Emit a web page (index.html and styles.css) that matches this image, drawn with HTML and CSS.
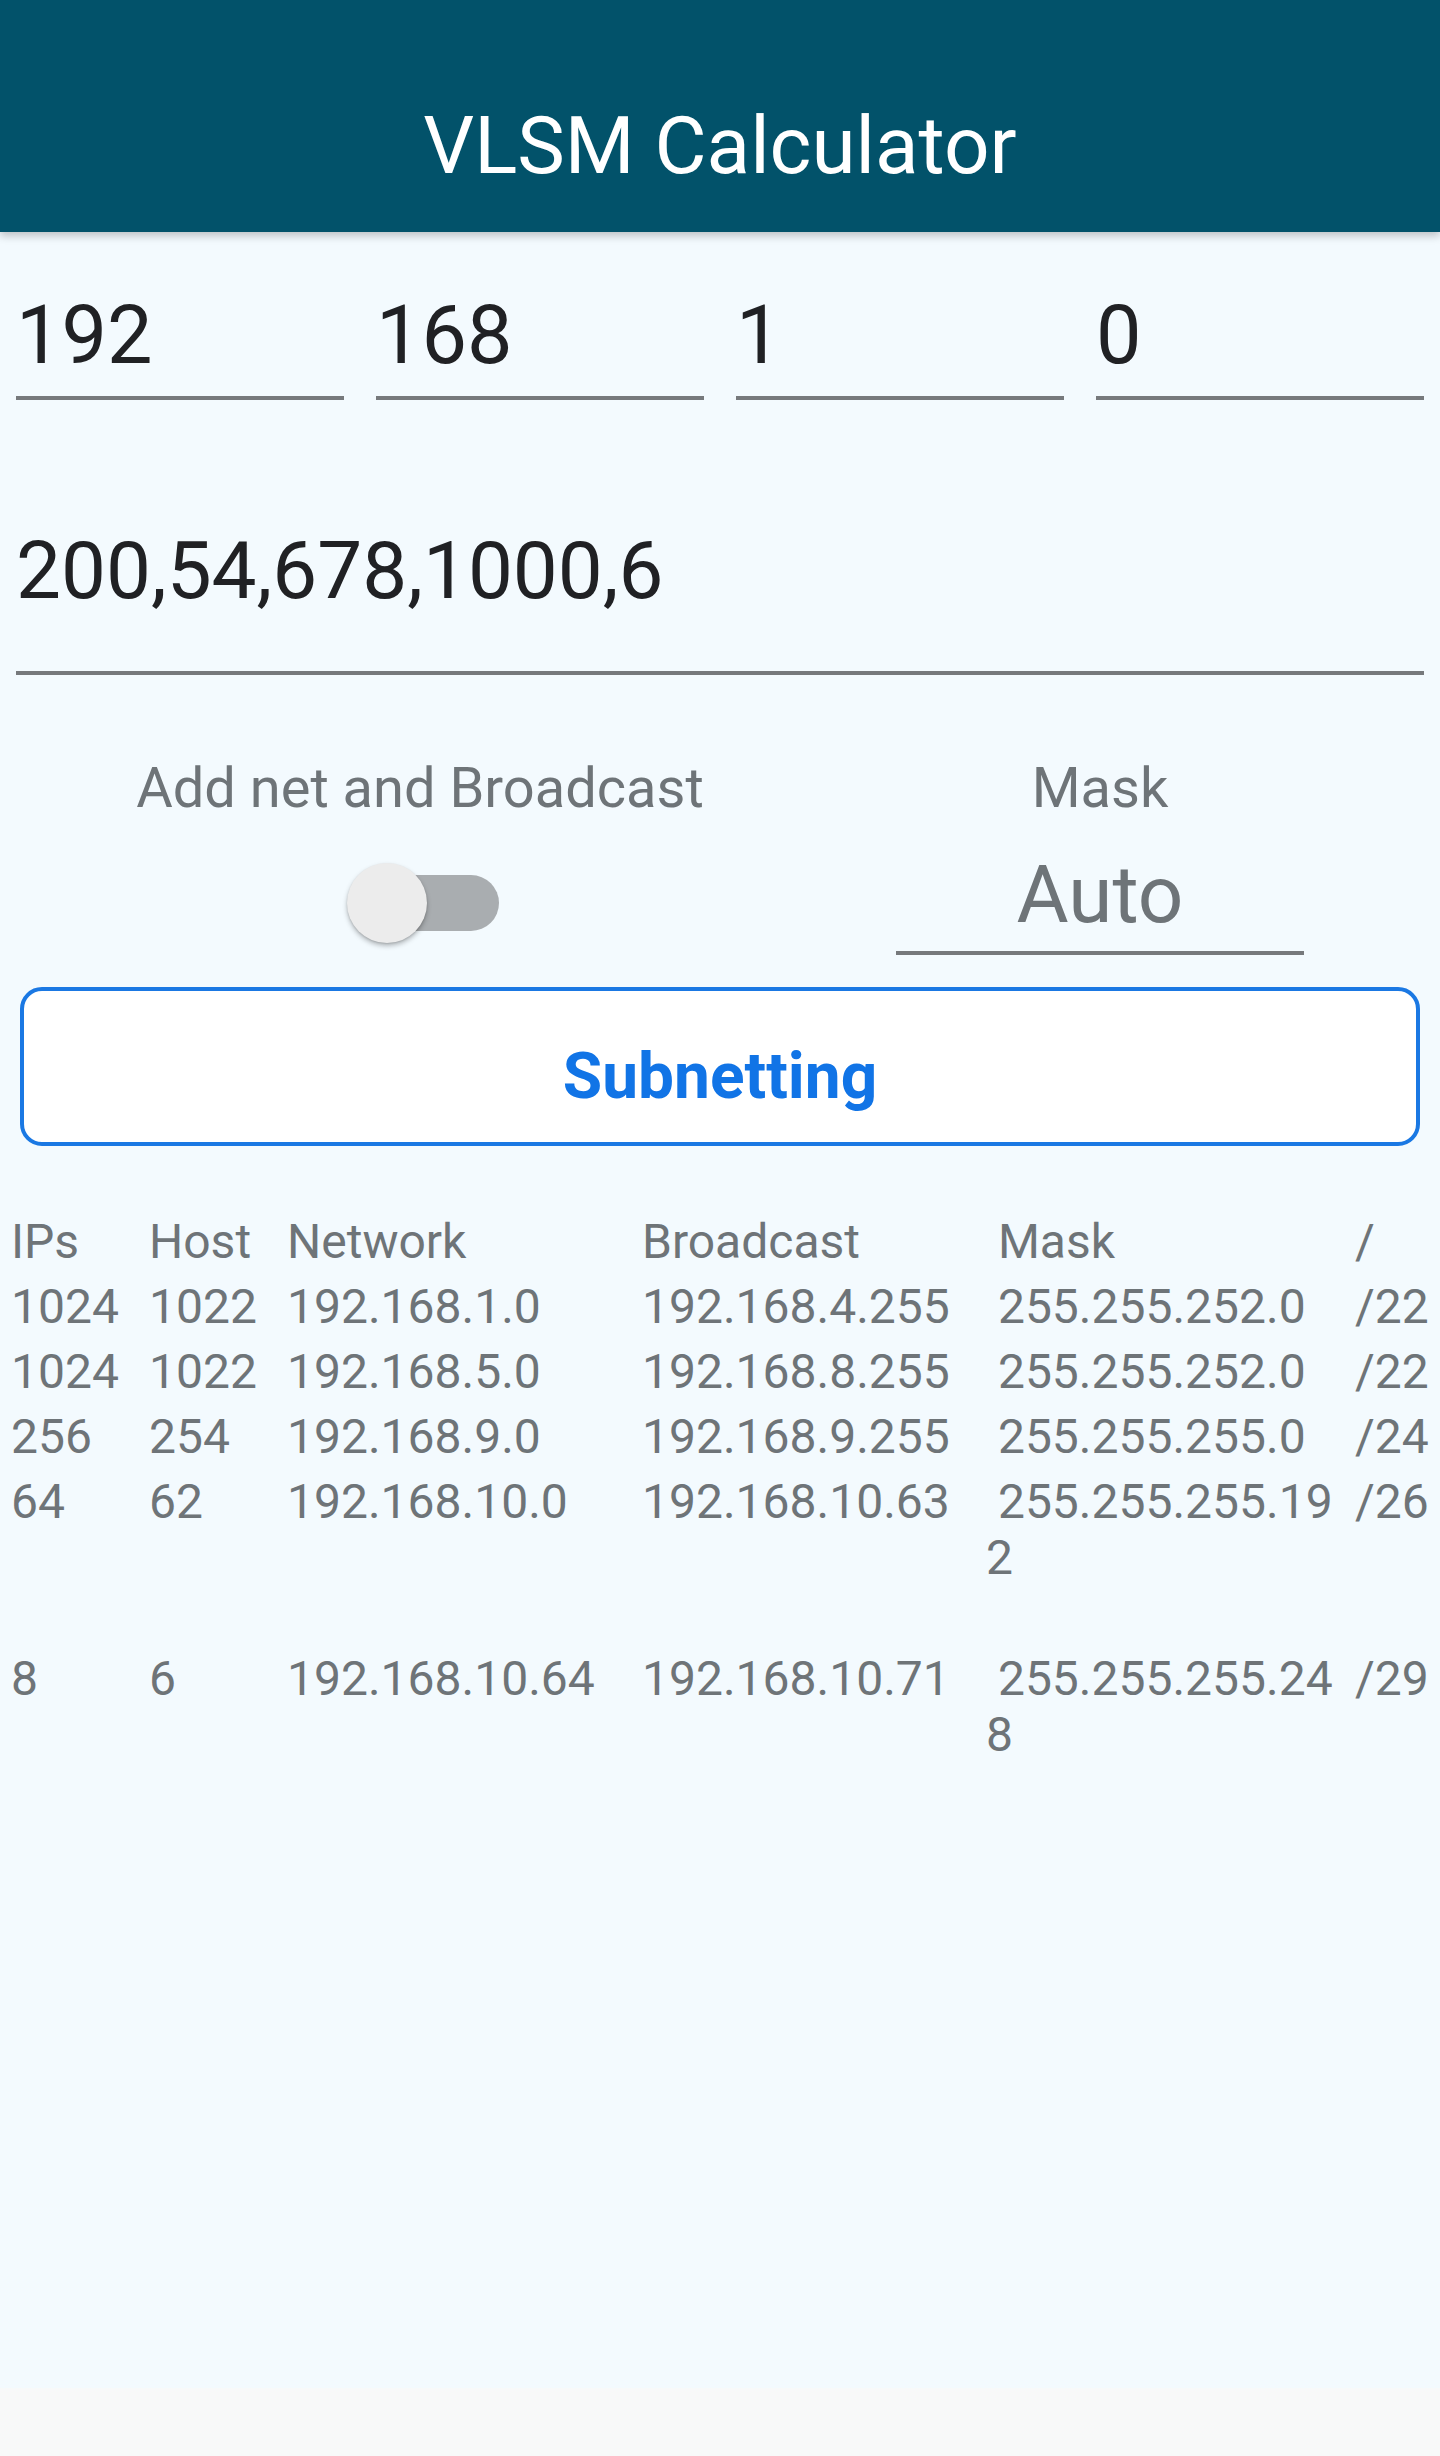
FILE: index.html
```html
<!DOCTYPE html>
<html lang="en">
<head>
<meta charset="utf-8">
<title>VLSM Calculator</title>
<link rel="stylesheet" href="styles.css">
</head>
<body>
<div class="app">
  <header class="appbar">
    <h1 class="title">VLSM Calculator</h1>
  </header>
  <main class="content">
    <div class="octets">
      <div class="field octet">192</div>
      <div class="field octet">168</div>
      <div class="field octet">1</div>
      <div class="field octet">0</div>
    </div>
    <div class="field hosts">200,54,678,1000,6</div>
    <div class="options">
      <div class="opt">
        <div class="opt-label">Add net and Broadcast</div>
        <div class="switch">
          <span class="track"></span>
          <span class="thumb"></span>
        </div>
      </div>
      <div class="opt">
        <div class="opt-label">Mask</div>
        <div class="mask-field">Auto</div>
      </div>
    </div>
    <button class="btn" type="button">Subnetting</button>
    <div class="results">
      <div class="cell">IPs</div><div class="cell">Host</div><div class="cell">Network</div><div class="cell">Broadcast</div><div class="cell mask"> Mask</div><div class="cell">/</div>
      <div class="cell">1024</div><div class="cell">1022</div><div class="cell">192.168.1.0</div><div class="cell">192.168.4.255</div><div class="cell mask"> 255.255.252.0</div><div class="cell">/22</div>
      <div class="cell">1024</div><div class="cell">1022</div><div class="cell">192.168.5.0</div><div class="cell">192.168.8.255</div><div class="cell mask"> 255.255.252.0</div><div class="cell">/22</div>
      <div class="cell">256</div><div class="cell">254</div><div class="cell">192.168.9.0</div><div class="cell">192.168.9.255</div><div class="cell mask"> 255.255.255.0</div><div class="cell">/24</div>
      <div class="cell">64</div><div class="cell">62</div><div class="cell">192.168.10.0</div><div class="cell">192.168.10.63</div><div class="cell mask extra"> 255.255.255.192</div><div class="cell">/26</div>
      <div class="cell">8</div><div class="cell">6</div><div class="cell">192.168.10.64</div><div class="cell">192.168.10.71</div><div class="cell mask extra"> 255.255.255.248</div><div class="cell">/29</div>
    </div>
  </main>
  <div class="navbar"></div>
</div>
</body>
</html>
```

FILE: styles.css
```css
* {
  box-sizing: border-box;
}

html, body {
  margin: 0;
  padding: 0;
}

body {
  font-family: Roboto, "Noto Sans", "Liberation Sans", sans-serif;
  background: #f3fafe;
}

.app {
  display: flex;
  flex-direction: column;
  height: 2456px;
  overflow: hidden;
}

.appbar {
  height: 232px;
  flex: 0 0 232px;
  background: #02526a;
  padding-top: 106px;
  box-shadow: 0 4px 8px rgba(0, 0, 0, 0.22);
  position: relative;
  z-index: 1;
}

.title {
  margin: 0;
  font-size: 80px;
  line-height: 80px;
  font-weight: 400;
  color: #ffffff;
  text-align: center;
}

.content {
  flex: 1;
  padding-top: 54px;
  background: #f3fafe;
}

.octets {
  display: grid;
  grid-template-columns: repeat(4, 328px);
  column-gap: 32px;
  padding: 0 16px;
}

.field {
  color: #202124;
  border-bottom: 4px solid #76797c;
}

.octet {
  font-size: 81px;
  line-height: 100px;
  padding-bottom: 10px;
}

.hosts {
  margin: 121px 16px 0;
  font-size: 80px;
  line-height: 100px;
  padding-bottom: 50px;
}

.options {
  display: grid;
  grid-template-columns: 808px 552px;
  padding: 0 16px;
  margin-top: 80px;
}

.opt {
  display: flex;
  flex-direction: column;
  align-items: center;
}

.opt-label {
  font-size: 56px;
  line-height: 66px;
  color: #6e7478;
}

.switch {
  position: relative;
  width: 152px;
  height: 80px;
  margin-top: 42px;
  margin-left: 6px;
}

.track {
  position: absolute;
  left: 14px;
  right: 0;
  top: 12px;
  height: 56px;
  border-radius: 28px;
  background: #a9adb0;
}

.thumb {
  position: absolute;
  left: 0;
  top: 0;
  width: 80px;
  height: 80px;
  border-radius: 50%;
  background: #ececec;
  box-shadow: 0 3px 5px rgba(0, 0, 0, 0.26), 0 1px 2px rgba(0, 0, 0, 0.12);
}

.mask-field {
  width: 408px;
  margin-top: 27px;
  font-size: 80px;
  line-height: 94px;
  padding-bottom: 9px;
  text-align: center;
  color: #6e7478;
  border-bottom: 4px solid #76797c;
}

.btn {
  display: flex;
  align-items: center;
  justify-content: center;
  width: 1400px;
  height: 159px;
  margin: 32px 20px 0;
  padding: 20px 0 0;
  background: #ffffff;
  border: 4px solid #1a78e3;
  border-radius: 22px;
  font-family: Roboto, "Noto Sans", "Liberation Sans", sans-serif;
  font-size: 64px;
  font-weight: 700;
  color: #1174e6;
}

.results {
  display: grid;
  grid-template-columns: 138px 138px 355px 344px 369px 85px;
  row-gap: 9px;
  margin: 68px 0 0 11px;
  font-size: 48px;
  line-height: 56px;
  color: #6e7478;
}

.cell {
  white-space: pre-wrap;
}

.mask {
  word-break: break-all;
}

.extra {
  padding-bottom: 56px;
}

.navbar {
  flex: 0 0 68px;
  background: #f8f9f9;
}
```
